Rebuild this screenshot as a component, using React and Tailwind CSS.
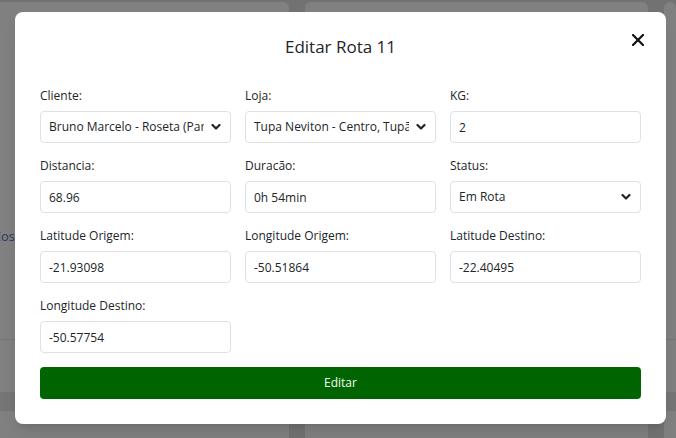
import { useState } from "react";

const font = { fontFamily: '"Open Sans", "Noto Sans", sans-serif' };

const Chevron = () => (
  <svg className="pointer-events-none absolute right-[10px] top-1/2 -translate-y-1/2" width="10" height="7" viewBox="0 0 10 7" fill="none">
    <path d="M1.5 1.5 L5 5 L8.5 1.5" stroke="#212529" strokeWidth="2.2" strokeLinecap="round" strokeLinejoin="round" />
  </svg>
);

const Field = ({ label, children }) => (
  <div className="flex flex-col">
    <label className="h-[18px] text-[12px] leading-[18px] text-[#212529] mb-[6px]">{label}</label>
    {children}
  </div>
);

const Input = ({ value }) => (
  <input
    defaultValue={value}
    className="h-[32px] w-full rounded-[4px] border border-[#dee2e6] bg-white px-[8px] text-[12px] text-[#212529] outline-none"
  />
);

const Select = ({ value, options }) => (
  <div className="relative">
    <select
      defaultValue={value}
      className="h-[32px] w-full appearance-none rounded-[4px] border border-[#dee2e6] bg-white pl-[8px] pr-[26px] text-[12px] text-[#212529] outline-none"
    >
      {options.map((o) => (
        <option key={o}>{o}</option>
      ))}
    </select>
    <Chevron />
  </div>
);

export default function App() {
  const [open] = useState(true);

  return (
    <div className="relative h-[438px] w-[676px] overflow-hidden bg-[#727272]" style={font}>
      {/* Page behind the modal */}
      <div className="flex h-full gap-[16px] pt-[2px]">
        <div className="ml-[-20px] flex w-[309px] flex-col rounded-t-[6px] bg-[#808080]">
          <div className="h-[225px]" />
          <div className="w-[35px] overflow-hidden text-right text-[13px] text-[#2f3a60]">Cos</div>
          <div className="h-[92px]" />
          <div className="h-px bg-[#747474]" />
          <div className="h-[52px]" />
          <div className="h-[19px] bg-[#757575]" />
        </div>
        <div className="flex w-[343px] flex-col rounded-t-[6px] bg-[#808080]">
          <div className="h-[337px]" />
          <div className="h-px bg-[#747474]" />
          <div className="h-[52px]" />
          <div className="h-[19px] bg-[#757575]" />
        </div>
        <div className="flex flex-1 flex-col rounded-t-[6px] bg-[#808080]">
          <div className="h-[337px]" />
          <div className="h-px bg-[#747474]" />
          <div className="h-[52px]" />
          <div className="h-[19px] bg-[#757575]" />
        </div>
      </div>

      {/* Modal */}
      {open && (
        <div className="absolute left-[15px] top-[12px] w-[651px] rounded-[8px] bg-white px-[25px] pt-[23px] pb-[25px] shadow-lg">
          <div className="relative flex h-[24px] items-center justify-center">
            <h2 className="text-[17px] leading-[24px] text-[#212529]">Editar Rota 11</h2>
            <button className="absolute right-[-3px] top-[-1px] flex h-[12px] w-[12px] items-center justify-center">
              <svg width="12" height="12" viewBox="0 0 12 12">
                <path d="M1 1 L11 11 M11 1 L1 11" stroke="#111" strokeWidth="2.2" strokeLinecap="square" />
              </svg>
            </button>
          </div>

          <div className="mt-[28px] grid grid-cols-3 gap-x-[14px] gap-y-[14px]">
            <Field label="Cliente:">
              <Select value="Bruno Marcelo - Roseta (Paraguaçu Paulista)" options={["Bruno Marcelo - Roseta (Paraguaçu Paulista)"]} />
            </Field>
            <Field label="Loja:">
              <Select value="Tupa Neviton - Centro, Tupã" options={["Tupa Neviton - Centro, Tupã"]} />
            </Field>
            <Field label="KG:">
              <Input value="2" />
            </Field>

            <Field label="Distancia:">
              <Input value="68.96" />
            </Field>
            <Field label="Duracão:">
              <Input value="0h 54min" />
            </Field>
            <Field label="Status:">
              <Select value="Em Rota" options={["Pendente", "Em Rota", "Entregue"]} />
            </Field>

            <Field label="Latitude Origem:">
              <Input value="-21.93098" />
            </Field>
            <Field label="Longitude Origem:">
              <Input value="-50.51864" />
            </Field>
            <Field label="Latitude Destino:">
              <Input value="-22.40495" />
            </Field>

            <Field label="Longitude Destino:">
              <Input value="-50.57754" />
            </Field>
          </div>

          <button className="mt-[14px] h-[32px] w-full rounded-[4px] bg-[#006400] text-[12px] text-[#f0fff0]">
            Editar
          </button>
        </div>
      )}
    </div>
  );
}
